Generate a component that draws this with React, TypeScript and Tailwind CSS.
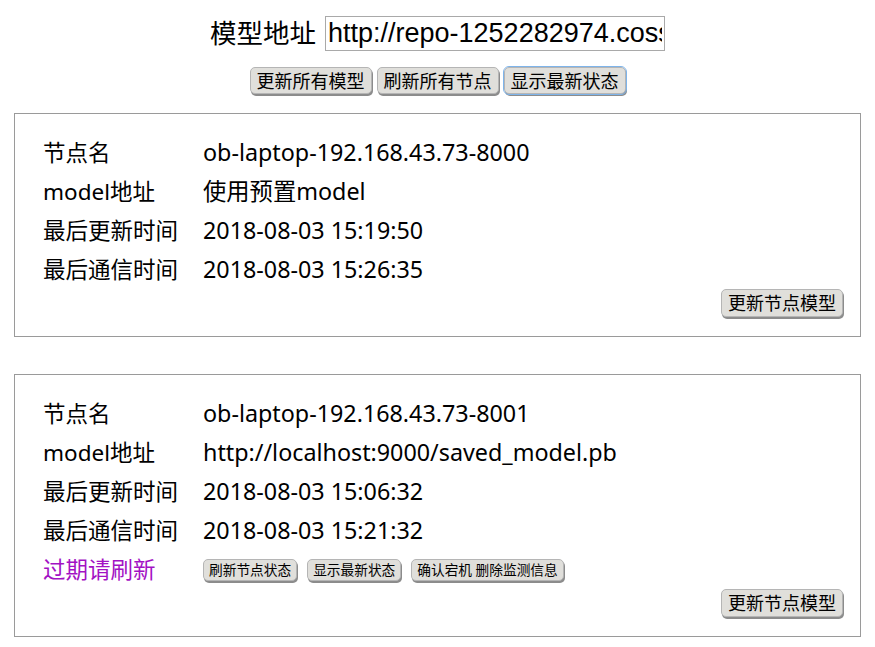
import React from "react"

const btn =
  "bg-[#e0dfdb] border border-[#b5b5b5] rounded-[5px] shadow-[1px_2px_0_#8c8c8c] text-black leading-none whitespace-nowrap"

type Node = {
  name: string
  model: string
  updated: string
  contacted: string
  stale?: boolean
}

const nodes: Node[] = [
  {
    name: "ob-laptop-192.168.43.73-8000",
    model: "使用预置model",
    updated: "2018-08-03 15:19:50",
    contacted: "2018-08-03 15:26:35",
  },
  {
    name: "ob-laptop-192.168.43.73-8001",
    model: "http://localhost:9000/saved_model.pb",
    updated: "2018-08-03 15:06:32",
    contacted: "2018-08-03 15:21:32",
    stale: true,
  },
]

function Row({ label, value }: { label: string; value: string }) {
  return (
    <div className="flex h-[39px] items-center">
      <div className="w-[160px] text-[22.5px]">{label}</div>
      <div className="text-[23.3px]">{value}</div>
    </div>
  )
}

function NodeCard({ node }: { node: Node }) {
  return (
    <div className="mx-[14px] border border-[#9a9a9a] pt-[19px] pb-[19px] pl-[28px] pr-[17px]">
      <Row label="节点名" value={node.name} />
      <Row label="model地址" value={node.model} />
      <Row label="最后更新时间" value={node.updated} />
      <Row label="最后通信时间" value={node.contacted} />
      {node.stale && (
        <div className="flex h-[39px] items-center">
          <div className="w-[160px] text-[22.5px] text-[#a312c4]">过期请刷新</div>
          <div className="flex gap-[10px] text-[13.7px]">
            <button className={`${btn} h-[22px] px-[5px]`}>刷新节点状态</button>
            <button className={`${btn} h-[22px] px-[5px]`}>显示最新状态</button>
            <button className={`${btn} h-[22px] px-[5px]`}>确认宕机 删除监测信息</button>
          </div>
        </div>
      )}
      <div className="flex justify-end">
        <button className={`${btn} h-[28px] px-[6px] text-[18px]`}>更新节点模型</button>
      </div>
    </div>
  )
}

export default function App() {
  return (
    <div
      className="min-h-screen bg-white text-[22px] text-black pb-4"
      style={{ fontFamily: '"Noto Sans", "Noto Sans CJK SC", sans-serif' }}
    >
      <div className="flex justify-center items-center gap-[9px] pt-[16px]">
        <span className="text-[26.5px] leading-none">模型地址</span>
        <input
          readOnly
          value="http://repo-1252282974.cossh.myqcloud.com/saved_model.pb"
          className="w-[340px] h-[35px] border border-[#a9a9a9] px-[2px] text-[27px] outline-none"
          style={{ fontFamily: '"Liberation Sans", Arial, sans-serif' }}
        />
      </div>
      <div className="flex justify-center gap-[5px] mt-[16px] text-[18px]">
        <button className={`${btn} h-[27px] px-[6px]`}>更新所有模型</button>
        <button className={`${btn} h-[27px] px-[6px]`}>刷新所有节点</button>
        <button className={`${btn} h-[27px] px-[6px] outline outline-1 outline-[#7eb4ea]`}>显示最新状态</button>
      </div>
      <div className="mt-[19px] flex flex-col gap-[37px]">
        {nodes.map((n) => (
          <NodeCard key={n.name} node={n} />
        ))}
      </div>
    </div>
  )
}
